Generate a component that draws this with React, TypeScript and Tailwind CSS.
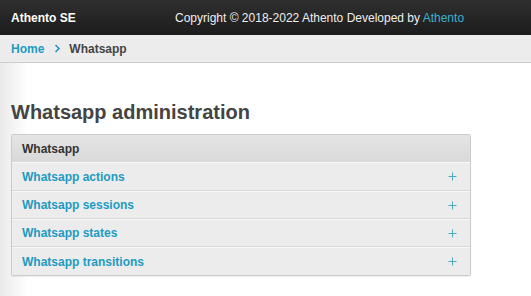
import React from "react";

const rows = ["Whatsapp actions", "Whatsapp sessions", "Whatsapp states", "Whatsapp transitions"];

function Plus() {
  return (
    <svg width="9" height="9" viewBox="0 0 9 9" className="shrink-0">
      <path d="M4.5 0.5V8.5M0.5 4.5H8.5" stroke="#4aaabf" strokeWidth="1" />
    </svg>
  );
}

export default function App() {
  return (
    <div className="w-[531px] h-[296px] overflow-hidden bg-white font-['Liberation_Sans',Arial,sans-serif]">
      <div className="h-[35px] flex items-center px-[11px] bg-[linear-gradient(to_bottom,#2f2f2f,#1c1c1c)]">
        <div className="text-white font-bold text-[12px] w-[164px]">Athento SE</div>
        <div className="text-[#eeeeee] text-[12px]">
          Copyright © 2018-2022 Athento Developed by <span className="text-[#3ab0d0]">Athento</span>
        </div>
      </div>
      <div className="h-[28px] flex items-center px-[11px] bg-[#ececec] border-b border-[#cccccc] text-[12px] font-bold">
        <span className="text-[#1d9bc2]">Home</span>
        <svg width="7" height="9" viewBox="0 0 7 9" className="ml-[10px] mr-[8px]">
          <path d="M1.5 1L5 4.5L1.5 8" stroke="#1d9bc2" strokeWidth="1.6" fill="none" />
        </svg>
        <span className="text-[#444444]">Whatsapp</span>
      </div>
      <div className="h-[233px] px-[11px] pt-[37px] bg-[linear-gradient(to_right,#eaeaea,#ffffff_28px)]">
        <h1 className="text-[20px] font-bold text-[#444444] leading-[24px]">Whatsapp administration</h1>
        <div className="mt-[10px] w-[460px] border border-[#cccccc] rounded-[2px] shadow-[0_1px_1px_rgba(0,0,0,0.08)]">
          <div className="h-[28px] flex items-center px-[10px] bg-[linear-gradient(to_bottom,#e4e4e4,#d9d9d9)] border-b border-[#f8f8f8] text-[12px] font-bold text-[#333333]">
            Whatsapp
          </div>
          {rows.map((r, i) => (
            <div
              key={r}
              className={`h-[28px] flex items-center justify-between pl-[10px] pr-[13px] bg-[#ececec] text-[12px] font-bold text-[#1d9bc2] ${
                i < rows.length - 1 ? "border-b border-[#d8d8d8]" : ""
              } ${i > 0 ? "border-t border-t-[#f8f8f8]" : ""}`}
            >
              <span>{r}</span>
              <Plus />
            </div>
          ))}
        </div>
      </div>
    </div>
  );
}
